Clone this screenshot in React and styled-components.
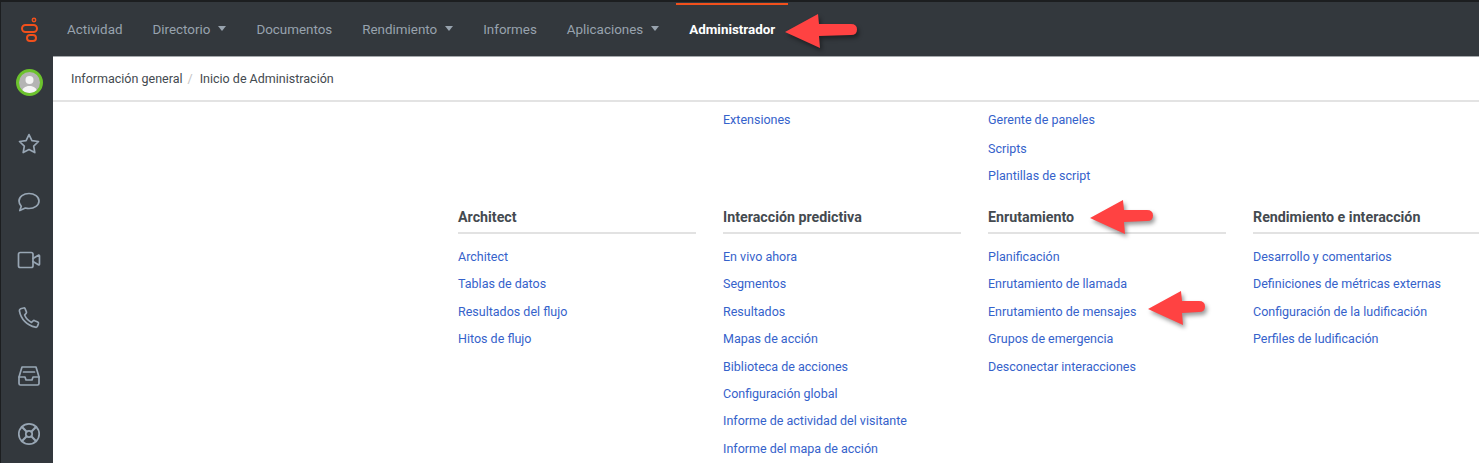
import React from 'react';
import styled, { createGlobalStyle } from 'styled-components';

const Global = createGlobalStyle`
  html, body { margin: 0; padding: 0; background: #000; overflow: hidden; }
  #root { width: 1479px; height: 463px; }
`;
const Frame = styled.div`
  position: relative; width: 1479px; height: 463px; box-sizing: border-box;
  padding: 2px 0 2px 1px; background: #1c1e20; overflow: hidden;
  font-family: Roboto, "Liberation Sans", sans-serif; font-size: 12.5px;
  display: grid; grid-template-columns: 52px 1fr; grid-template-rows: 54px 1fr;
`;
const LogoCell = styled.div`
  background: #33383d; display: flex; align-items: center; justify-content: center; padding-left: 4px;
`;
const TopNav = styled.nav`
  background: #33383d; display: flex; align-items: stretch; gap: 4px; padding-left: 1px; font-size: 13.4px;
`;
const NavItem = styled.div`
  display: flex; align-items: center; gap: 8px; padding: 0 13px 3px;
  margin-top: 1px;
  color: ${p => (p.$active ? '#fff' : '#98a3ae')};
  font-weight: ${p => (p.$active ? 700 : 400)};
  border-top: 2px solid ${p => (p.$active ? '#f2501c' : 'transparent')};
`;
const Caret = styled.span`
  width: 0; height: 0; border-left: 4.5px solid transparent; border-right: 4.5px solid transparent;
  border-top: 5px solid #98a3ae; margin-top: -2px;
`;
const Rail = styled.aside`
  background: #33383d; display: flex; flex-direction: column; align-items: center; padding: 13px 0 0 4px;
`;
const Avatar = styled.div`
  width: 27px; height: 27px; border-radius: 50%; box-sizing: border-box; flex: none;
  border: 3px solid #6cc22d; background: #b4b4b4; overflow: hidden; margin-bottom: 35.6px;
`;
const RailIcon = styled.svg`
  width: 24px; height: 24px; flex: none; margin-bottom: 34px; fill: none;
  stroke: #98a6b4; stroke-width: 1.7; stroke-linecap: round; stroke-linejoin: round;
`;
const Main = styled.main`background: #fff; overflow: hidden; box-shadow: inset 0 1px #a5a9ac;`;
const Crumbs = styled.div`
  height: 46px; box-sizing: border-box; border-bottom: 2px solid #e3e3e3;
  display: flex; align-items: center; padding-left: 18px; color: #444a50;
`;
const Sep = styled.span`color: #c4c4c4; margin: 0 7px 0 5px;`;
const Grid = styled.div`
  display: grid; grid-template-columns: repeat(4, 238px); column-gap: 27px;
  padding-left: 405px; padding-top: 4px;
`;
const Section = styled.section`grid-column: ${p => p.$col || 'auto'};`;
const Title = styled.h3`
  margin: 0 0 9px; height: 33px; box-sizing: border-box; padding-top: 8px; line-height: 17px;
  border-bottom: 2px solid #e2e2e2; color: #444a50; font-size: 14.25px; font-weight: 700;
`;
const TopBlock = styled.div`height: 95px;`;
const LinkRow = styled.a`
  display: block; height: ${p => (p.$tall ? 29 : 27.4)}px; line-height: 27.4px; color: #3562cb; white-space: nowrap;
`;
const Arrow = styled.svg`
  position: absolute; left: ${p => p.$x}px; top: ${p => p.$y}px; overflow: visible;
  filter: drop-shadow(2px 3px 2px rgba(0,0,0,.4));
`;

const Pointer = ({ x, y, w }) => (
  <Arrow $x={x} $y={y} width={w} height="35" viewBox={`0 0 ${w} 35`}>
    <path d={`M0 18 L33 0 L34 10 L${w - 6} 10 Q${w} 10 ${w} 15.5 Q${w} 21 ${w - 6} 21 L34 22 L35 34 Z`} fill="#ff4242" />
  </Arrow>
);

const rail = [
  <path d="M12 2.6l2.900 6 6.600.9-4.800 4.600 1.100 6.500L12 17.500l-5.800 3.100 1.100-6.500L2.500 9.500l6.600-.9z" />,
  <path d="M12 3.500c5.400 0 10 3.300 10 7.500s-4.600 7.500-10 7.500c-1.300 0-2.600-.2-3.700-.5L2.800 20.500l1.500-4.200C2.900 14.900 2 13.100 2 11c0-4.200 4.600-7.500 10-7.500z" />,
  <><rect x="1.500" y="4.500" width="14.500" height="15" rx="1.800" /><path d="M16 10.500l5.800-3.500c.4 0 .7.300.7.700v8.600c0 .4-.3.700-.7.700L16 13.500" /></>,
  <path d="M3.700 2.700L6.500 2c.7-.2 1.300.1 1.600.7l1.300 3.200c.2.500.1 1.100-.3 1.500L7.600 9c1.200 3 3.600 5.700 6.900 7.400l1.600-1.500c.4-.4 1.100-.5 1.600-.2l3 1.400c.6.300.9 1 .7 1.600l-.9 2.400c-.3.900-1.100 1.300-2 1.100C9.800 19.400 3.900 12.900 2.400 4.800c-.1-.9.500-1.800 1.300-2.100z" />,
  <><path d="M5 3h14l3 10v6.500a1.500 1.500 0 0 1-1.500 1.500h-17A1.500 1.500 0 0 1 2 19.500V13z" /><path d="M2 13h6l1 3h6l1-3h6" /><path d="M6.500 8h11" /></>,
  <><circle cx="12" cy="12" r="10.200" /><circle cx="12" cy="12" r="3.200" /><path strokeWidth="2.100" d="M4.800 4.800l4.900 4.900M19.200 4.800l-4.900 4.900M4.800 19.200l4.900-4.900M19.200 19.200l-4.900-4.900" /></>,
];

const cols = [
  { t: 'Architect', l: ['Architect', 'Tablas de datos', 'Resultados del flujo', 'Hitos de flujo'] },
  { t: 'Interacción predictiva', l: ['En vivo ahora', 'Segmentos', 'Resultados', 'Mapas de acción', 'Biblioteca de acciones', 'Configuración global', 'Informe de actividad del visitante', 'Informe del mapa de acción'] },
  { t: 'Enrutamiento', l: ['Planificación', 'Enrutamiento de llamada', 'Enrutamiento de mensajes', 'Grupos de emergencia', 'Desconectar interacciones'] },
  { t: 'Rendimiento e interacción', l: ['Desarrollo y comentarios', 'Definiciones de métricas externas', 'Configuración de la ludificación', 'Perfiles de ludificación'] },
];

export default function App() {
  return (
    <Frame>
      <Global />
      <LogoCell>
        <svg width="22" height="30" viewBox="0 0 22 30" fill="none" stroke="#f2501c" strokeWidth="2">
          <circle cx="16" cy="6" r="1.700" strokeWidth="1.500" />
          <rect x="4" y="11" width="15" height="7" rx="3.500" />
          <rect x="9" y="21" width="9" height="6" rx="3" />
        </svg>
      </LogoCell>
      <TopNav>
        <NavItem>Actividad</NavItem>
        <NavItem>Directorio<Caret /></NavItem>
        <NavItem>Documentos</NavItem>
        <NavItem>Rendimiento<Caret /></NavItem>
        <NavItem>Informes</NavItem>
        <NavItem>Aplicaciones<Caret /></NavItem>
        <NavItem $active>Administrador</NavItem>
      </TopNav>
      <Rail>
        <Avatar>
          <svg width="21" height="21" viewBox="0 0 21 21" fill="#f4f4f4">
            <circle cx="10.500" cy="8" r="4" />
            <path d="M3 21c0-5 3-7 7.500-7s7.500 2 7.500 7z" />
          </svg>
        </Avatar>
        {rail.map((p, i) => <RailIcon key={i} viewBox="0 0 24 24">{p}</RailIcon>)}
      </Rail>
      <Main>
        <Crumbs>Información general<Sep>/</Sep>Inicio de Administración</Crumbs>
        <Grid>
          <Section $col="2"><TopBlock><LinkRow>Extensiones</LinkRow></TopBlock></Section>
          <Section $col="3"><TopBlock><LinkRow $tall>Gerente de paneles</LinkRow><LinkRow>Scripts</LinkRow><LinkRow>Plantillas de script</LinkRow></TopBlock></Section>
          {cols.map((c, i) => (
            <Section key={c.t} $col={String(i + 1)}>
              <Title>{c.t}</Title>
              {c.l.map(x => <LinkRow key={x}>{x}</LinkRow>)}
            </Section>
          ))}
        </Grid>
      </Main>
      <Pointer x={785} y={14} w={72} />
      <Pointer x={1090} y={200} w={63} />
      <Pointer x={1148} y={291} w={57} />
    </Frame>
  );
}
